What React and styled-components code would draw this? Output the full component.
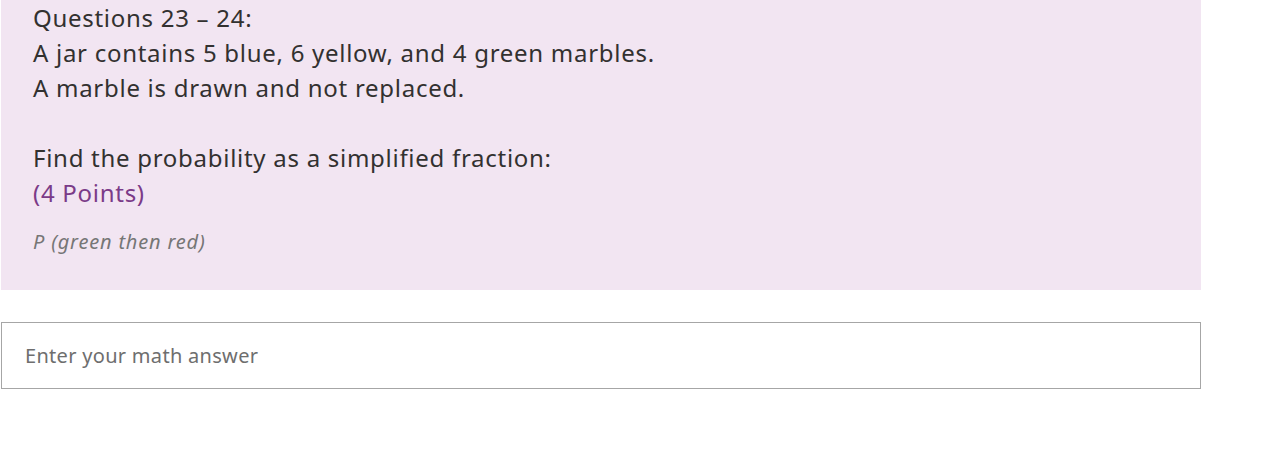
import React from 'react'
import styled, { createGlobalStyle } from 'styled-components'

const GlobalStyle = createGlobalStyle`
  body {
    margin: 0;
    background: #fff;
    font-family: 'Noto Sans', 'Open Sans', sans-serif;
  }
`

const Page = styled.div`
  width: 1200px;
  padding-left: 1px;
  display: flex;
  flex-direction: column;
  gap: 32px;
`

const QuestionPanel = styled.div`
  background-color: #f2e5f2;
  padding: 0 32px 34px;
`

const Line = styled.div`
  font-size: 24px;
  line-height: 35px;
  letter-spacing: 0.72px;
  color: #323130;
  min-height: 35px;
`

const Points = styled(Line)`
  color: #7b3b88;
`

const Hint = styled.div`
  margin-top: 18px;
  font-size: 20px;
  line-height: 28px;
  letter-spacing: 0.8px;
  font-style: italic;
  color: #767676;
`

const AnswerInput = styled.input`
  box-sizing: border-box;
  width: 1200px;
  height: 67px;
  border: 1px solid #a6a6a6;
  border-radius: 0;
  padding: 0 23px;
  font-family: 'Noto Sans', 'Open Sans', sans-serif;
  font-size: 20px;
  letter-spacing: 0.3px;
  color: #323130;
  background: #fff;
  outline: none;

  &::placeholder {
    color: #6e6e6e;
  }
`

export default function App() {
  return (
    <>
      <GlobalStyle />
      <Page>
        <QuestionPanel>
          <Line>Questions 23 – 24:</Line>
          <Line>A jar contains 5 blue, 6 yellow, and 4 green marbles.</Line>
          <Line>A marble is drawn and not replaced.</Line>
          <Line />
          <Line>Find the probability as a simplified fraction:</Line>
          <Points>(4 Points)</Points>
          <Hint>P (green then red)</Hint>
        </QuestionPanel>
        <AnswerInput placeholder="Enter your math answer" />
      </Page>
    </>
  )
}
